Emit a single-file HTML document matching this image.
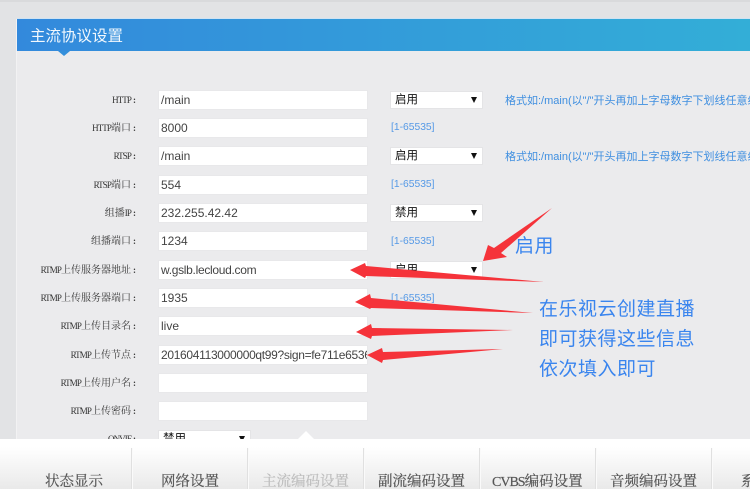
<!DOCTYPE html>
<html><head><meta charset="utf-8"><style>
html,body{margin:0;padding:0;width:750px;height:489px;overflow:hidden}
body{position:relative;background:#e2e3e5;font-family:"Liberation Sans","Noto Sans CJK SC",sans-serif}
#w{position:absolute;left:0;top:0;width:750px;height:489px;overflow:hidden;filter:blur(.25px)}
.a{position:absolute}
.panel{left:17px;top:19px;width:733px;height:430px;background:#ebebed;box-shadow:-1px 0 0 #f2f2f3}
.head{left:17px;top:19px;width:733px;height:32px;background:linear-gradient(90deg,#3389dc,#33aed7);color:#f2f8fd;font-size:15.5px;line-height:35px;text-indent:13px}
.tri{left:58px;top:51px;width:0;height:0;border:6px solid transparent;border-top:5px solid #338fdb;border-bottom:0}
.l{left:0;width:136px;font:10px/16px "Liberation Serif","Noto Serif CJK SC",serif;color:#3a3a3a;white-space:nowrap;text-align:right}
.l b{font:9px/16px "Liberation Serif",serif;letter-spacing:-.9px;color:#333}
.l i{font:bold 9px/16px "Liberation Serif",serif;padding-left:2px}
.i{left:159px;width:204px;padding:0 2px;height:18px;background:#fff;box-shadow:0 0 0 1px #e8e8ea;font-size:12px;line-height:19px;color:#444;overflow:hidden;white-space:nowrap}
.s{left:391px;width:91px;height:16px;background:#fff;box-shadow:0 0 0 1px #e4e4e6;font-size:11.5px;line-height:17px;color:#111;text-indent:4px;overflow:hidden}
.s:after{content:"";position:absolute;right:5px;top:5px;border:3.5px solid transparent;border-top:6px solid #111;border-bottom:0}
.r{left:391px;font-size:10.3px;line-height:12px;color:#5599e6;white-space:nowrap}
.h{left:505px;width:245px;overflow:hidden;font-size:11px;line-height:14px;color:#3f8fe0;white-space:nowrap}
.b{left:539px;font-size:19px;letter-spacing:.5px;line-height:24px;color:#3a85ee;white-space:nowrap}
.bar{left:0;top:439px;width:750px;height:50px;background:linear-gradient(#fff 15%,#e9e9e9);overflow:hidden}
.up{left:298px;top:431px;border:8px solid transparent;border-bottom:8px solid #fff;border-top:0;width:0;height:0}
.d{top:9px;width:1px;height:41px;background:#e0e0e0;box-shadow:1px 0 0 #fafafa}
.t{top:34px;height:16px;overflow:hidden;font:14.5px/18px "Liberation Serif","Noto Serif CJK SC",serif;color:#555;white-space:nowrap;-webkit-text-stroke:.2px #555}
.t b{font:14px/18px "Liberation Serif",serif;letter-spacing:-1px}
</style></head><body><div id="w">
<div class="a" style="left:0;top:0;width:750px;height:2px;background:#d9dadc"></div>
<div class="a panel"></div>
<div class="a" style="left:17px;top:18px;width:733px;height:1px;background:#cfe3f3"></div>
<div class="a head">主流协议设置</div>
<div class="a tri"></div>

<div class="a l" style="top:92px"><b>HTTP</b><i>:</i></div>
<div class="a l" style="top:120px"><b>HTTP</b>端口<i>:</i></div>
<div class="a l" style="top:148px"><b>RTSP</b><i>:</i></div>
<div class="a l" style="top:177px"><b>RTSP</b>端口<i>:</i></div>
<div class="a l" style="top:205px">组播<b>IP</b><i>:</i></div>
<div class="a l" style="top:233px">组播端口<i>:</i></div>
<div class="a l" style="top:262px"><b>RTMP</b>上传服务器地址<i>:</i></div>
<div class="a l" style="top:290px"><b>RTMP</b>上传服务器端口<i>:</i></div>
<div class="a l" style="top:318px"><b>RTMP</b>上传目录名<i>:</i></div>
<div class="a l" style="top:347px"><b>RTMP</b>上传节点<i>:</i></div>
<div class="a l" style="top:375px"><b>RTMP</b>上传用户名<i>:</i></div>
<div class="a l" style="top:403px"><b>RTMP</b>上传密码<i>:</i></div>
<div class="a l" style="top:431px"><b>ONVIF</b><i>:</i></div>

<div class="a i" style="top:91px">/main</div>
<div class="a i" style="top:119px">8000</div>
<div class="a i" style="top:147px">/main</div>
<div class="a i" style="top:176px">554</div>
<div class="a i" style="top:204px">232.255.42.42</div>
<div class="a i" style="top:232px">1234</div>
<div class="a i" style="top:261px;letter-spacing:-.3px">w.gslb.lecloud.com</div>
<div class="a i" style="top:289px">1935</div>
<div class="a i" style="top:317px">live</div>
<div class="a i" style="top:346px;letter-spacing:-.32px">201604113000000qt99?sign=fe711e65365</div>
<div class="a i" style="top:374px"></div>
<div class="a i" style="top:402px"></div>

<div class="a s" style="top:92px">启用</div>
<div class="a r" style="top:122px">[1-65535]</div>
<div class="a s" style="top:148px">启用</div>
<div class="a r" style="top:179px">[1-65535]</div>
<div class="a s" style="top:205px">禁用</div>
<div class="a r" style="top:236px">[1-65535]</div>
<div class="a s" style="top:262px">启用</div>
<div class="a r" style="top:293px">[1-65535]</div>
<div class="a s" style="left:159px;top:431px">禁用</div>

<div class="a h" style="top:94px">格式如:/main(以"/"开头再加上字母数字下划线任意组合)</div>
<div class="a h" style="top:150px">格式如:/main(以"/"开头再加上字母数字下划线任意组合)</div>

<svg class="a" style="left:0;top:0" width="750" height="489" viewBox="0 0 750 489">
<g fill="#f5333a">
<polygon points="552,208 494,248 488,245 483,261 507,257 501,253"/>
<polygon points="350,270 365,263 366,266 544,282 366,276 365,278"/>
<polygon points="355,302 370,294 371,298 533,313 371,308 370,309"/>
<polygon points="356,332 371,324 372,328 513,330 372,336 371,339"/>
<polygon points="367,355 382,348 383,352 503,349 383,360 382,363"/>
</g>
</svg>

<div class="a b" style="left:515px;top:235px">启用</div>
<div class="a b" style="top:298px">在乐视云创建直播</div>
<div class="a b" style="top:328px">即可获得这些信息</div>
<div class="a b" style="top:358px">依次填入即可</div>

<div class="a bar">
<div class="a d" style="left:131px"></div>
<div class="a d" style="left:247px"></div>
<div class="a d" style="left:363px"></div>
<div class="a d" style="left:479px"></div>
<div class="a d" style="left:595px"></div>
<div class="a d" style="left:711px"></div>
<div class="a t" style="left:45px">状态显示</div>
<div class="a t" style="left:161px">网络设置</div>
<div class="a t" style="left:262px;color:#bdbdbd;-webkit-text-stroke:.2px #bdbdbd">主流编码设置</div>
<div class="a t" style="left:378px">副流编码设置</div>
<div class="a t" style="left:492px"><b>CVBS</b>编码设置</div>
<div class="a t" style="left:610px">音频编码设置</div>
<div class="a t" style="left:741px;width:9px">系统设置</div>
</div>
<div class="a up"></div>
</div></body></html>
